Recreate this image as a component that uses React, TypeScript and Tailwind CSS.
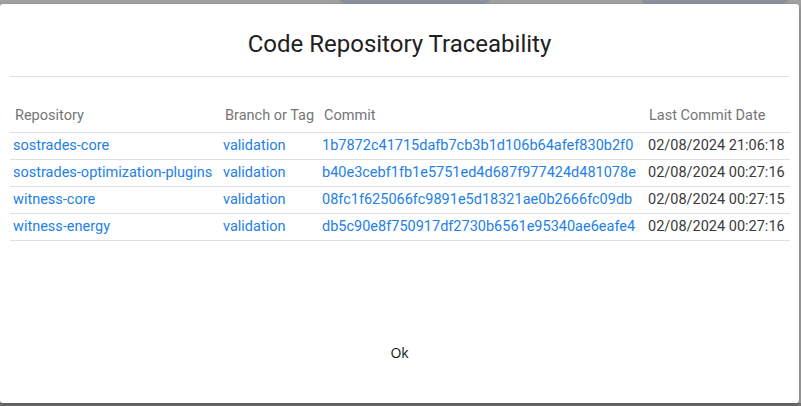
import React from 'react';

const rows = [
  { repo: 'sostrades-core', branch: 'validation', commit: '1b7872c41715dafb7cb3b1d106b64afef830b2f0', date: '02/08/2024 21:06:18' },
  { repo: 'sostrades-optimization-plugins', branch: 'validation', commit: 'b40e3cebf1fb1e5751ed4d687f977424d481078e', date: '02/08/2024 00:27:16' },
  { repo: 'witness-core', branch: 'validation', commit: '08fc1f625066fc9891e5d18321ae0b2666fc09db', date: '02/08/2024 00:27:15' },
  { repo: 'witness-energy', branch: 'validation', commit: 'db5c90e8f750917df2730b6561e95340ae6eafe4', date: '02/08/2024 00:27:16' },
];

const App: React.FC = () => {
  return (
    <div className="relative w-[801px] h-[406px] bg-[#a3a3a3] overflow-hidden pt-[4px] pr-[2px] pb-[3px] font-['Roboto',sans-serif]">
      {/* dimmed page behind the dialog */}
      <div className="absolute top-[-20px] left-[336px] w-[157px] h-[25px] bg-[#8d94a0] rounded-b-[14px]"></div>
      <div className="absolute top-[-20px] left-[638px] w-[154px] h-[25px] bg-[#8d94a0] rounded-b-[14px]"></div>
      <div className="absolute bottom-0 left-0 w-full h-[3px] bg-[#777777]"></div>

      <div className="relative h-full bg-white rounded-[3px] shadow-[0_2px_6px_rgba(0,0,0,0.3)] flex flex-col">
        <h2 className="pt-[24px] text-center text-[24px] leading-[32px] text-[#212121] font-normal">
          Code Repository Traceability
        </h2>
        <div className="mx-[10px] mt-[16px] border-b border-[#e0e0e0]"></div>

        <table className="mx-[10px] mt-[21px] w-[780px] table-fixed border-collapse text-[14.5px]">
          <colgroup>
            <col className="w-[210px]" />
            <col className="w-[99px]" />
            <col className="w-[326px]" />
            <col className="w-[145px]" />
          </colgroup>
          <thead>
            <tr className="h-[34px] border-b border-[#e0e0e0] text-[#757575]">
              <th className="pl-[5px] pt-[2px] text-left font-normal">Repository</th>
              <th className="pl-[5px] pt-[2px] text-left font-normal">Branch or Tag</th>
              <th className="pl-[5px] pt-[2px] text-left font-normal">Commit</th>
              <th className="pl-[4px] pt-[2px] text-left font-normal">Last Commit Date</th>
            </tr>
          </thead>
          <tbody>
            {rows.map(r => (
              <tr key={r.repo} className="h-[27px] border-b border-[#e0e0e0]">
                <td className="pl-[3px] text-[#1e7fe6] whitespace-nowrap">{r.repo}</td>
                <td className="pl-[3px] text-[#1e7fe6] whitespace-nowrap">{r.branch}</td>
                <td className="pl-[3px] text-[#1e7fe6] whitespace-nowrap">{r.commit}</td>
                <td className="pl-[3px] text-[#3a3a3a] whitespace-nowrap">{r.date}</td>
              </tr>
            ))}
          </tbody>
        </table>

        <div className="mt-auto mb-[33px] flex justify-center">
          <button className="h-9 px-4 text-[14px] text-[#111111] font-['Open_Sans',sans-serif]">Ok</button>
        </div>
      </div>
    </div>
  );
};

export default App;
